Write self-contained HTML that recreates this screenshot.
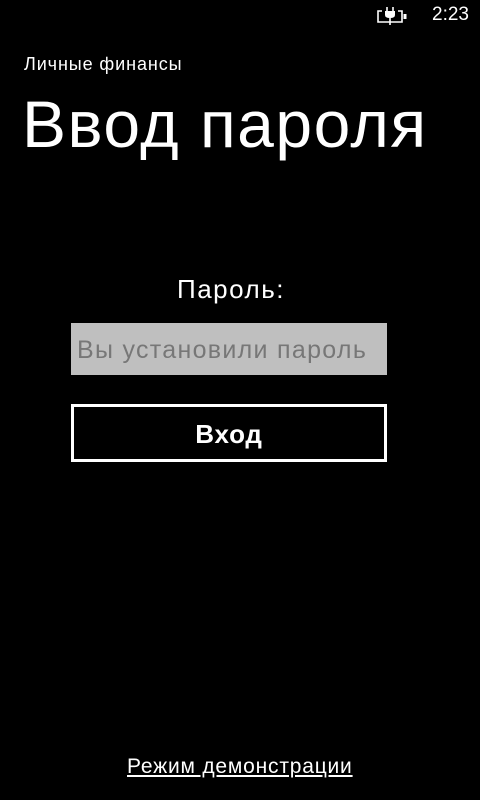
<!DOCTYPE html>
<html><head><meta charset="utf-8"><style>
body{margin:0;width:480px;height:800px;background:#000;color:#fff;font-family:"Liberation Sans","DejaVu Sans",sans-serif;position:relative;overflow:hidden}
div,span{position:absolute;white-space:nowrap}
</style></head><body>
<svg style="position:absolute;left:376px;top:6px" width="34" height="20" viewBox="0 0 34 20">
<path d="M6 5 H2 V16 H26 V5 H22" stroke="#fff" stroke-width="1.6" fill="none"/>
<rect x="27.5" y="8" width="3" height="5" fill="#fff"/>
<path d="M11 1 V5 M17 1 V5" stroke="#fff" stroke-width="1.6"/>
<path d="M9 5 H19 V9 Q19 12 14 12 Q9 12 9 9 Z" fill="#fff"/>
<path d="M14 12 V19" stroke="#fff" stroke-width="1.6"/>
</svg>
<span style="left:432px;top:4px;font-size:19px">2:23</span>
<span style="left:24px;top:54px;font-size:18px;letter-spacing:0.9px">Личные финансы</span>
<span style="left:22px;top:86px;font-size:66px;letter-spacing:1.5px">Ввод пароля</span>
<span style="left:0;width:462px;text-align:center;top:274px;font-size:26px;letter-spacing:1.5px">Пароль:</span>
<div style="left:71px;top:323px;width:316px;height:52px;background:#bfbfbf"></div>
<span style="left:77px;top:336px;font-size:25px;letter-spacing:1.3px;color:#777">Вы установили пароль</span>
<div style="left:71px;top:404px;width:310px;height:52px;border:3px solid #fff"></div>
<span style="left:71px;width:316px;text-align:center;top:419px;font-size:26px;letter-spacing:0.8px;font-weight:bold">Вход</span>
<span style="left:127px;top:755px;font-size:21px;letter-spacing:0.8px;text-decoration:underline">Режим демонстрации</span>
</body></html>
